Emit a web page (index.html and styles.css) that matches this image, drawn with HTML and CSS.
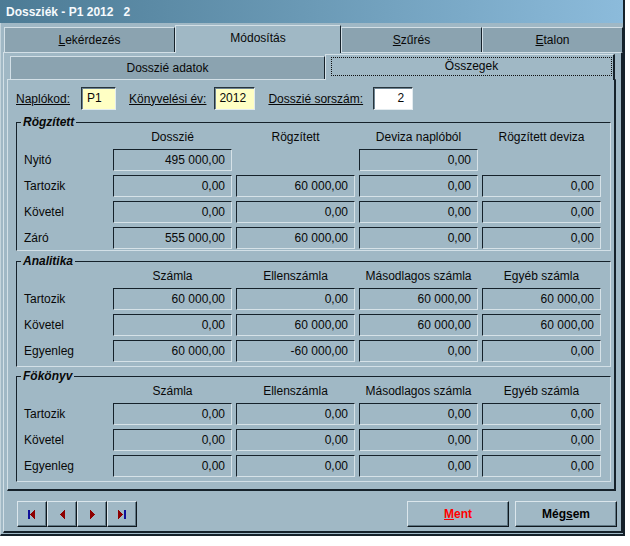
FILE: index.html
```html
<!DOCTYPE html>
<html lang="hu">
<head>
<meta charset="utf-8">
<title>Dossziék - P1 2012 2</title>
<link rel="stylesheet" href="styles.css">
</head>
<body>
<div class="window">
  <div class="titlebar">Dossziék - P1 2012&nbsp;&nbsp;&nbsp;2</div>
  <div class="tabs">
    <div class="tab t1"><u>L</u>ekérdezés</div>
    <div class="tab t2 active">Módosítás</div>
    <div class="tab t3"><u>S</u>zűrés</div>
    <div class="tab t4"><u>E</u>talon</div>
  </div>
  <div class="panel">
    <div class="subtabs">
      <div class="subtab s1">Dosszié adatok</div>
      <div class="subtab s2 active"><div class="focus">Összegek</div></div>
    </div>
    <div class="subpanel">
      <div class="formrow">
        <span class="lbl l1">Naplókod:</span>
        <span class="inp yellow i1">P1</span>
        <span class="lbl l2">Könyvelési év:</span>
        <span class="inp yellow i2">2012</span>
        <span class="lbl l3">Dosszié sorszám:</span>
        <span class="inp white i3">2</span>
      </div>

      <fieldset class="group g1">
        <legend>Rögzített</legend>
        <div class="grid">
          <div></div>
          <div class="hdr">Dosszié</div>
          <div class="hdr">Rögzített</div>
          <div class="hdr">Deviza naplóból</div>
          <div class="hdr">Rögzített deviza</div>

          <div class="rl">Nyitó</div>
          <div class="fld">495 000,00</div>
          <div></div>
          <div class="fld">0,00</div>
          <div></div>

          <div class="rl">Tartozik</div>
          <div class="fld">0,00</div>
          <div class="fld">60 000,00</div>
          <div class="fld">0,00</div>
          <div class="fld">0,00</div>

          <div class="rl">Követel</div>
          <div class="fld">0,00</div>
          <div class="fld">0,00</div>
          <div class="fld">0,00</div>
          <div class="fld">0,00</div>

          <div class="rl">Záró</div>
          <div class="fld">555 000,00</div>
          <div class="fld">60 000,00</div>
          <div class="fld">0,00</div>
          <div class="fld">0,00</div>
        </div>
      </fieldset>

      <fieldset class="group g2">
        <legend>Analitika</legend>
        <div class="grid">
          <div></div>
          <div class="hdr">Számla</div>
          <div class="hdr">Ellenszámla</div>
          <div class="hdr">Másodlagos számla</div>
          <div class="hdr">Egyéb számla</div>

          <div class="rl">Tartozik</div>
          <div class="fld">60 000,00</div>
          <div class="fld">0,00</div>
          <div class="fld">60 000,00</div>
          <div class="fld">60 000,00</div>

          <div class="rl">Követel</div>
          <div class="fld">0,00</div>
          <div class="fld">60 000,00</div>
          <div class="fld">60 000,00</div>
          <div class="fld">60 000,00</div>

          <div class="rl">Egyenleg</div>
          <div class="fld">60 000,00</div>
          <div class="fld">-60 000,00</div>
          <div class="fld">0,00</div>
          <div class="fld">0,00</div>
        </div>
      </fieldset>

      <fieldset class="group g3">
        <legend>Fökönyv</legend>
        <div class="grid">
          <div></div>
          <div class="hdr">Számla</div>
          <div class="hdr">Ellenszámla</div>
          <div class="hdr">Másodlagos számla</div>
          <div class="hdr">Egyéb számla</div>

          <div class="rl">Tartozik</div>
          <div class="fld">0,00</div>
          <div class="fld">0,00</div>
          <div class="fld">0,00</div>
          <div class="fld">0,00</div>

          <div class="rl">Követel</div>
          <div class="fld">0,00</div>
          <div class="fld">0,00</div>
          <div class="fld">0,00</div>
          <div class="fld">0,00</div>

          <div class="rl">Egyenleg</div>
          <div class="fld">0,00</div>
          <div class="fld">0,00</div>
          <div class="fld">0,00</div>
          <div class="fld">0,00</div>
        </div>
      </fieldset>
    </div>

    <div class="bottombar">
      <div class="nav">
        <div class="btn navbtn">
          <svg width="8" height="9" viewBox="0 0 8 9" shape-rendering="crispEdges"><rect x="0" y="0" width="2" height="9" fill="#10109a"/><polygon points="2,4.5 7,0 7,9" fill="#8e0000"/></svg>
        </div>
        <div class="btn navbtn">
          <svg width="5" height="9" viewBox="0 0 5 9" shape-rendering="crispEdges"><polygon points="0,4.5 5,0 5,9" fill="#8e0000"/></svg>
        </div>
        <div class="btn navbtn">
          <svg width="5" height="9" viewBox="0 0 5 9" shape-rendering="crispEdges"><polygon points="5,4.5 0,0 0,9" fill="#8e0000"/></svg>
        </div>
        <div class="btn navbtn">
          <svg width="8" height="9" viewBox="0 0 8 9" shape-rendering="crispEdges"><polygon points="5,4.5 0,0 0,9" fill="#8e0000"/><rect x="6" y="0" width="2" height="9" fill="#10109a"/></svg>
        </div>
      </div>
      <div class="btn cmd ment"><u>M</u>ent</div>
      <div class="btn cmd megsem">Még<u>s</u>em</div>
    </div>
  </div>
</div>
</body>
</html>
```

FILE: styles.css
```css
* {
  box-sizing: border-box;
}

html,
body {
  margin: 0;
  padding: 0;
  background: #ffffff;
}

body {
  font-family: "Liberation Sans", Arial, sans-serif;
  font-size: 12px;
  color: #080808;
}

.window {
  width: 625px;
  height: 536px;
  background: #a0b8c5;
  border-left: 1px solid #c4d4dc;
  border-right: 2px solid #15212a;
  border-bottom: 2px solid #15212a;
  display: flex;
  flex-direction: column;
}

.titlebar {
  height: 23px;
  margin-left: -1px;
  padding-left: 6px;
  padding-top: 1px;
  background: linear-gradient(to right, #4c7b95 0%, #6b9ab6 50%, #8cbbdb 100%);
  color: #f6fafd;
  font-weight: bold;
  font-size: 12px;
  line-height: 22px;
  white-space: nowrap;
}

/* main tabs */
.tabs {
  display: flex;
  align-items: flex-end;
  height: 29px;
  margin-left: 3px;
}

.tab {
  height: 25px;
  background: #8ba3b0;
  border-top: 1px solid #d3e0e7;
  border-left: 1px solid #d3e0e7;
  border-right: 1px solid #15212a;
  text-align: center;
  line-height: 24px;
  white-space: nowrap;
}

.t1 { width: 171px; }
.t2 { width: 166px; }
.t3 { width: 141px; }
.t4 { width: 141px; }

.tab.active {
  height: 28px;
  margin-bottom: -1px;
  background: #a0b8c5;
  position: relative;
  z-index: 1;
  line-height: 24px;
}

.panel {
  margin-left: 2px;
  width: 620px;
  height: 481px;
  border-top: 1px solid #d3e0e7;
  border-left: 1px solid #d3e0e7;
  border-right: 2px solid #15212a;
  border-bottom: 2px solid #15212a;
  display: flex;
  flex-direction: column;
}

/* inner tabs */
.subtabs {
  display: flex;
  align-items: flex-end;
  height: 26px;
  margin-left: 6px;
}

.subtab {
  height: 23px;
  background: #8ba3b0;
  border-top: 1px solid #d3e0e7;
  border-left: 1px solid #d3e0e7;
  border-right: 1px solid #15212a;
  text-align: center;
  line-height: 22px;
  white-space: nowrap;
}

.s1 { width: 315px; }

.s2 {
  width: 290px;
}

.subtab.active {
  height: 26px;
  margin-bottom: -1px;
  background: #a0b8c5;
  position: relative;
  z-index: 1;
  border-right: 2px solid #15212a;
}

.focus {
  margin: 2px 0 0 5px;
  width: 281px;
  height: 19px;
  border: 1px dotted #101010;
  line-height: 17px;
}

.subpanel {
  margin-left: 3px;
  width: 609px;
  height: 412px;
  border-top: 1px solid #d3e0e7;
  border-left: 1px solid #d3e0e7;
  border-right: 2px solid #15212a;
  border-bottom: 2px solid #15212a;
  padding-left: 8px;
}

/* header form row */
.formrow {
  display: flex;
  align-items: center;
  height: 23px;
  margin-top: 7px;
}

.lbl {
  text-decoration: underline;
  white-space: nowrap;
}

.l2,
.l3 {
  margin-left: 13px;
}

.inp {
  height: 23px;
  line-height: 21px;
  border-top: 1px solid #26333b;
  border-left: 1px solid #26333b;
  border-right: 1px solid #e2ebef;
  border-bottom: 1px solid #e2ebef;
  box-shadow: inset 1px 1px 0 #6f8593;
  white-space: nowrap;
}

.yellow { background: #ffffc4; }
.white { background: #ffffff; }

.i1 {
  margin-left: 11px;
  width: 35px;
  padding-left: 5px;
}

.i2 {
  margin-left: 8px;
  width: 41px;
  padding-left: 4px;
}

.i3 {
  margin-left: 10px;
  width: 40px;
  text-align: right;
  padding-right: 8px;
}

/* group boxes */
fieldset.group {
  margin: 0;
  padding: 0 9px 1px 0;
  width: 595px;
  min-width: 0;
  border: 0;
  border-top: 1px solid #15212a;
  border-left: 1px solid #15212a;
  border-right: 1px solid #d3e0e7;
  border-bottom: 1px solid #d3e0e7;
}

.g1 { margin-top: 5px !important; }
.g2 { margin-top: 3px !important; padding-bottom: 4px !important; }
.g3 { margin-top: 2px !important; padding-bottom: 4px !important; }

legend {
  margin-left: 4px;
  padding: 0 2px;
  height: 14px;
  line-height: 14px;
  font-weight: bold;
  font-style: italic;
}

.grid {
  display: grid;
  grid-template-columns: 92px 119px 119px 119px 119px;
  grid-template-rows: 16px;
  grid-auto-rows: 22px;
  column-gap: 4px;
  row-gap: 4px;
}

.hdr {
  text-align: center;
  line-height: 16px;
  white-space: nowrap;
}

.rl {
  padding-left: 7px;
  line-height: 22px;
}

.fld {
  border-top: 1px solid #15212a;
  border-left: 1px solid #15212a;
  border-right: 1px solid #d6e2e8;
  border-bottom: 1px solid #d6e2e8;
  text-align: right;
  padding-right: 6px;
  line-height: 20px;
  white-space: nowrap;
}

/* bottom buttons */
.bottombar {
  display: flex;
  align-items: flex-start;
  margin-top: 10px;
  height: 26px;
}

.nav {
  display: flex;
  margin-left: 13px;
}

.btn {
  height: 26px;
  border-top: 1px solid #dbe6ec;
  border-left: 1px solid #dbe6ec;
  border-right: 1px solid #0f181e;
  border-bottom: 1px solid #0f181e;
  box-shadow: inset -1px -1px 0 #5f7784;
  display: flex;
  align-items: center;
  justify-content: center;
}

.navbtn {
  width: 30px;
}

.cmd {
  width: 102px;
  font-weight: bold;
  font-size: 12px;
}

.ment {
  margin-left: auto;
  color: #ff0000;
}

.megsem {
  margin-left: 6px;
  margin-right: 4px;
  color: #000000;
}
```
